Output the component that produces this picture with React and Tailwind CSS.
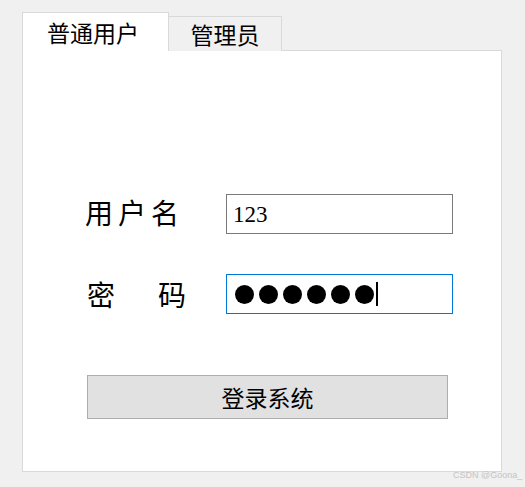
const CJK = "font-['Noto_Sans_CJK_SC',sans-serif]"

function Tabs() {
  return (
    <div className="flex items-end h-[39px] -mb-px relative z-10">
      <div className={`w-[147px] h-[39px] bg-white border border-b-0 border-[#d9d9d9] pl-[24px] pt-[4px] text-[23px] leading-[30px] text-black ${CJK}`}>
        普通用户
      </div>
      <div className={`w-[113px] h-[35px] bg-[#f0f0f0] border border-l-0 border-b-0 border-[#d9d9d9] flex justify-center pt-[2px] text-[23px] leading-[30px] text-black ${CJK}`}>
        管理员
      </div>
    </div>
  )
}

function Field({ label, children, focused }) {
  return (
    <div className="flex items-center">
      <div className="w-[139px]">{label}</div>
      <div
        className={`w-[227px] h-[40px] bg-white border flex items-center ${
          focused ? 'border-[#0078d7]' : 'border-[#7a7a7a]'
        }`}
      >
        {children}
      </div>
    </div>
  )
}

export default function App() {
  const dots = [0, 1, 2, 3, 4, 5]

  return (
    <div className="w-[525px] h-[487px] bg-[#f0f0f0] relative pt-[12px] pl-[22px] overflow-hidden">
      <Tabs />

      <div className="w-[480px] h-[422px] bg-white border border-[#d9d9d9] flex flex-col pl-[64px] pt-[143px]">
        <Field
          label={
            <span className={`-ml-[2px] text-[28px] leading-none tracking-[5px] text-black ${CJK}`}>用户名</span>
          }
        >
          <span className="pl-[6px] text-[23px] leading-none text-black font-['Liberation_Serif',serif]">123</span>
        </Field>

        <div className="mt-[40px]">
          <Field
            focused
            label={
              <div className={`flex gap-[43px] text-[28px] leading-none text-black ${CJK}`}>
                <span>密</span>
                <span>码</span>
              </div>
            }
          >
            <div className="flex items-center gap-[5px] pl-[8px]">
              {dots.map((d) => (
                <span key={d} className="w-[19px] h-[19px] rounded-full bg-black" />
              ))}
              <span className="w-[2px] h-[24px] bg-black -ml-[3px]" />
            </div>
          </Field>
        </div>

        <button
          type="button"
          className={`mt-[61px] w-[361px] h-[44px] bg-[#e1e1e1] border border-[#adadad] text-[23px] text-black ${CJK}`}
        >
          登录系统
        </button>
      </div>

      <span className="absolute left-[453px] top-[469px] text-[9px] text-[#c4c4c4] font-['Liberation_Sans',sans-serif]">
        CSDN @Goona_
      </span>
    </div>
  )
}
